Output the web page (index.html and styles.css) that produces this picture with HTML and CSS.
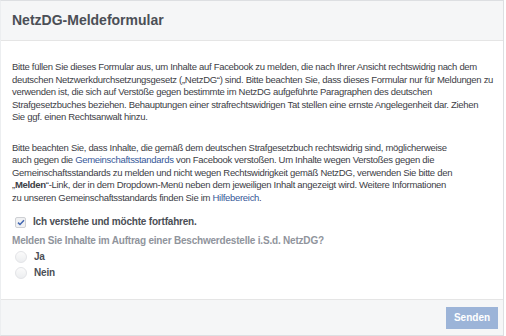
FILE: index.html
```html
<!DOCTYPE html>
<html>
<head>
<title>NetzDG-Meldeformular</title>
<meta name=viewport content="width=device-width, initial-scale=1">
<link rel="stylesheet" href="styles.css">
</head>
<body>
<form class=dialog name=report onsubmit="return false;">
 <div class=head>NetzDG-Meldeformular</div>
 <div class=content>
  <p>Bitte füllen Sie dieses Formular aus, um Inhalte auf Facebook zu melden, die nach Ihrer Ansicht rechtswidrig nach dem<br>
  deutschen Netzwerkdurchsetzungsgesetz („NetzDG“) sind. Bitte beachten Sie, dass dieses Formular nur für Meldungen zu<br>
  verwenden ist, die sich auf Verstöße gegen bestimmte im NetzDG aufgeführte Paragraphen des deutschen<br>
  Strafgesetzbuches beziehen. Behauptungen einer strafrechtswidrigen Tat stellen eine ernste Angelegenheit dar. Ziehen<br>
  Sie ggf. einen Rechtsanwalt hinzu.</p>
  <p>Bitte beachten Sie, dass Inhalte, die gemäß dem deutschen Strafgesetzbuch rechtswidrig sind, möglicherweise<br>
  auch gegen die <a href="#">Gemeinschaftsstandards</a> von Facebook verstoßen. Um Inhalte wegen Verstoßes gegen die<br>
  Gemeinschaftsstandards zu melden und nicht wegen Rechtswidrigkeit gemäß NetzDG, verwenden Sie bitte den<br>
  „<b>Melden</b>“-Link, der in dem Dropdown-Menü neben dem jeweiligen Inhalt angezeigt wird. Weitere Informationen<br>
  zu unseren Gemeinschaftsstandards finden Sie im <a href="#">Hilfebereich</a>.</p>
  <label class=check>
   <span class=box><svg width="8" height="7" viewBox="0 0 8 7"><path d="M1 3.6 L3 5.5 L7 1.2" fill="none" stroke="#4267b2" stroke-width="1.5"/></svg></span>
   Ich verstehe und möchte fortfahren.
  </label>
  <div class=question>Melden Sie Inhalte im Auftrag einer Beschwerdestelle i.S.d. NetzDG?</div>
  <label class=choice><span class=radio></span>Ja</label>
  <label class=choice><span class=radio></span>Nein</label>
 </div>
 <div class=foot>
  <button class=send type=submit disabled>Senden</button>
 </div>
</form>
</body>
</html>
```
FILE: styles.css
```css
body {
 margin:0;
 background-color:white;
 color:#1d2129;
 font-family:"Liberation Sans",Helvetica,Arial,sans-serif;
}
.dialog {
 width:504px;
 border:1px solid #dddfe2;
 border-left-color:#eceef0;
 box-sizing:border-box;
}
.head {
 height:39px;
 line-height:39px;
 padding:0 11px;
 background-color:#f5f6f7;
 border-bottom:1px solid #e5e5e5;
 color:#4b4f56;
 font-size:14px;
 font-weight:bold;
}
.content {
 padding:20px 2px 18px 11px;
 font-size:9.5px;
 letter-spacing:-0.3px;
 line-height:12.5px;
 color:#3d4046;
}
.content p {
 margin:0 0 18px 0;
}
.content a {
 color:#365899;
 text-decoration:none;
}
.check, .choice, .question {
 font-size:10px;
 letter-spacing:-0.2px;
}
.check, .choice {
 display:flex;
 align-items:center;
 gap:7px;
 padding-left:3px;
 font-weight:bold;
 color:#4b4f56;
}
.check {
 margin-top:-8px;
 height:16px;
}
.box {
 width:9px;
 height:9px;
 border:1px solid #ced0d4;
 border-radius:2px;
 background-color:#f0f1f3;
 display:flex;
 align-items:center;
 justify-content:center;
}
.question {
 margin-top:3px;
 height:16px;
 line-height:16px;
 font-weight:bold;
 color:#90949c;
}
.choice {
 height:16px;
}
.radio {
 width:10px;
 height:10px;
 border-radius:50%;
 border:1px solid #e3e4e7;
 background:linear-gradient(#fbfbfb,#eceef0);
}
.foot {
 height:35px;
 border-top:1px solid #e5e5e5;
 background-color:#f5f6f7;
 display:flex;
 align-items:center;
 justify-content:flex-end;
 padding:0 5px;
}
.send {
 width:52px;
 height:22px;
 border:none;
 background-color:#9cb4d8;
 color:white;
 font-family:"Liberation Sans",Helvetica,Arial,sans-serif;
 font-size:10px;
 font-weight:bold;
 padding:0;
}
```
